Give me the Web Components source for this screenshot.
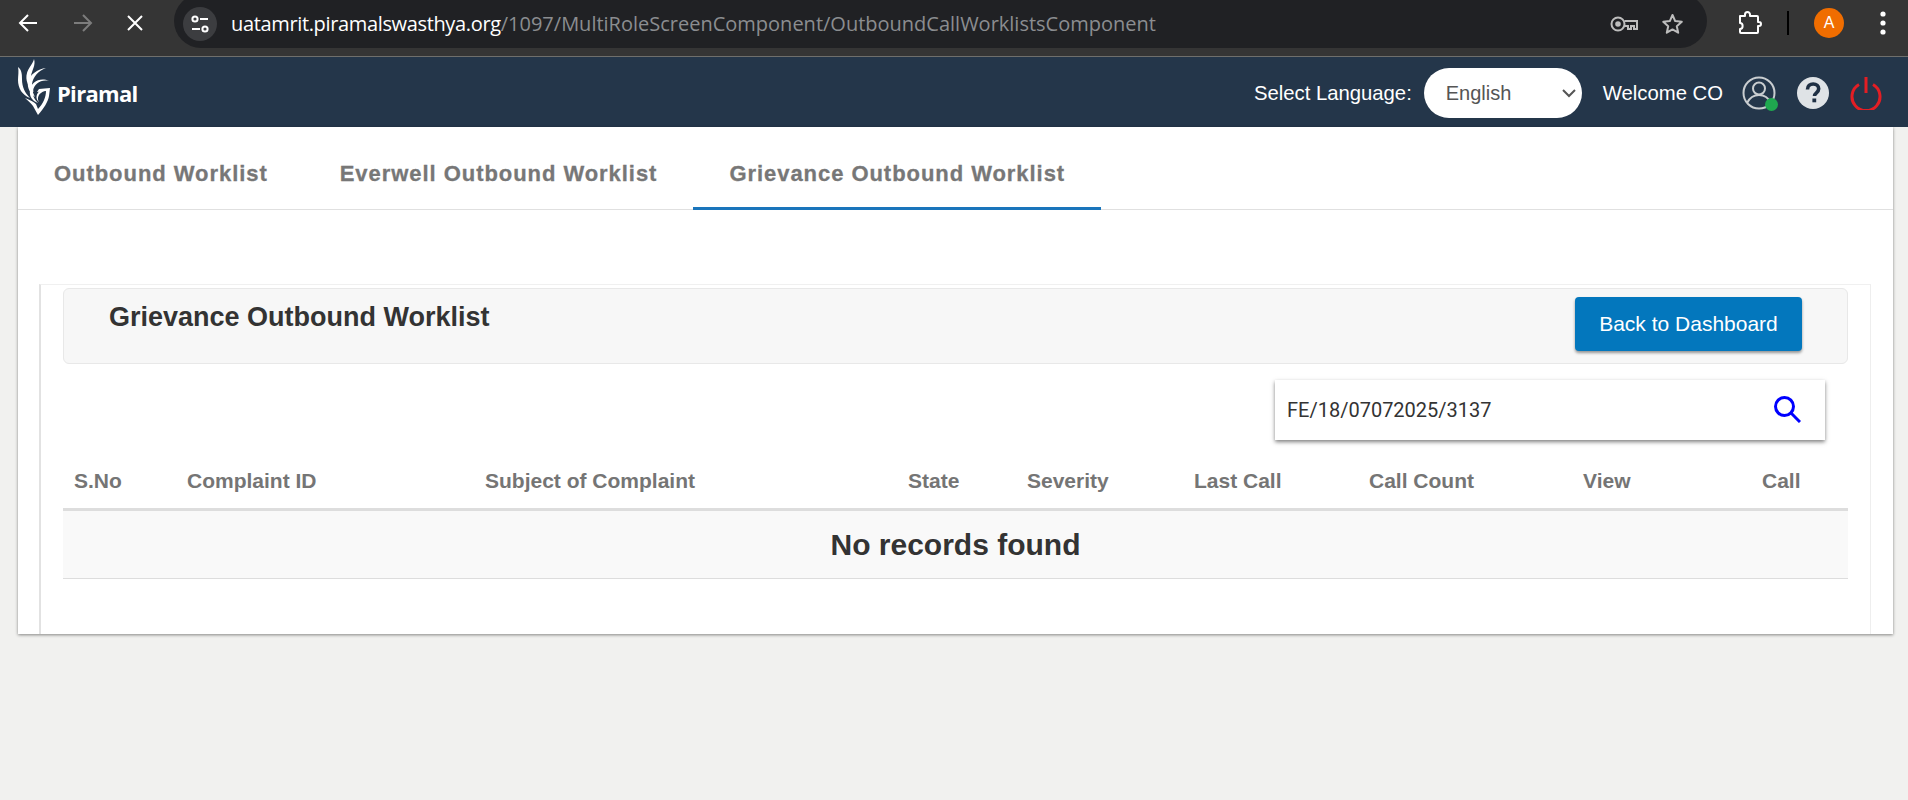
<!DOCTYPE html>
<html lang="en">
<head>
<meta charset="utf-8">
<title>Grievance Outbound Worklist</title>
<style>
    html, body { margin: 0; height: 100%; background: #f1f1ef; overflow: hidden; }
    body { font-family: "Liberation Sans", Arial, sans-serif; }
</style>
</head>
<body>
<browser-bar url-host="uatamrit.piramalswasthya.org" url-path="/1097/MultiRoleScreenComponent/OutboundCallWorklistsComponent"></browser-bar>
<app-header></app-header>
<main-card>
    <tab-bar></tab-bar>
    <worklist-panel></worklist-panel>
</main-card>

<script>
class BrowserBar extends HTMLElement {
    constructor() {
        super();
        this.attachShadow({ mode: 'open' });
        this.shadowRoot.innerHTML = `
            <style>
                :host {
                    display: flex;
                    align-items: flex-start;
                    height: 57px;
                    box-sizing: border-box;
                    background: #353535;
                    border-bottom: 1px solid #6f6f6c;
                    overflow: hidden;
                }
                .nav { display: flex; width: 174px; height: 46px; align-items: center; padding-left: 16px; gap: 29px; box-sizing: border-box; }
                .nav svg { flex: none; }
                .omni {
                    width: 1533px;
                    height: 54px;
                    margin-top: -6px;
                    padding: 6px 0 0 9px;
                    background: #202124;
                    border-radius: 27px;
                    display: flex;
                    align-items: center;
                    box-sizing: border-box;
                }
                .info { width: 34px; height: 34px; border-radius: 50%; background: #3c3d40; display: flex; align-items: center; justify-content: center; margin-right: 14px; }
                .url { font: 20px "Open Sans", sans-serif; letter-spacing: -0.35px; color: #fff; white-space: nowrap; flex: 1; margin-top: -2px; }
                .url span { color: #8b8d90; letter-spacing: 0; }
                .omni-end { display: flex; align-items: center; gap: 22px; margin-right: 22px; }
                .tools { display: flex; align-items: center; height: 46px; }
                .sep { width: 2px; height: 24px; background: #000; margin: 0 25px 0 24px; }
                .avatar { width: 30px; height: 30px; border-radius: 50%; background: #f06d00; color: #fff; font: 16px "Liberation Sans", sans-serif; display: flex; align-items: center; justify-content: center; }
                .dots { margin-left: 36px; }
            </style>
            <div class="nav">
                <svg width="24" height="24" viewBox="0 0 24 24" fill="none" stroke="#fff" stroke-width="2"><path d="M21 12H4M12 4l-8 8 8 8"/></svg>
                <svg width="24" height="24" viewBox="0 0 24 24" fill="none" stroke="#7c7c7c" stroke-width="2" style="margin-left:2px"><path d="M3 12h17M12 4l8 8-8 8"/></svg>
                <svg width="22" height="22" viewBox="0 0 22 22" fill="none" stroke="#fff" stroke-width="2" style="margin-left:0"><path d="M4 4l14 14M18 4L4 18"/></svg>
            </div>
            <div class="omni">
                <div class="info">
                    <svg width="20" height="18" viewBox="0 0 20 18" fill="none" stroke="#fff" stroke-width="2"><circle cx="5" cy="4" r="2.6"/><path d="M10 4h8M2 14h8"/><circle cx="15" cy="14" r="2.6"/></svg>
                </div>
                <div class="url"><b id="host" style="font-weight:400"></b><span id="path"></span></div>
                <div class="omni-end">
                    <svg width="28" height="18" viewBox="0 0 28 18" fill="none" stroke="#bdbdbd" stroke-width="2"><circle cx="8" cy="9" r="6.5"/><circle cx="8" cy="9" r="1.8" fill="#bdbdbd"/><path d="M14.5 6H27v8h-3v-3h-3v3h-3v-3h-3.5"/></svg>
                    <svg width="25" height="24" viewBox="0 0 24 24" fill="none" stroke="#bdbdbd" stroke-width="2" stroke-linejoin="round"><path d="M12 3l2.7 6.1 6.6.7-5 4.4 1.4 6.500L12 17.400l-5.700 3.300 1.400-6.500-5-4.400 6.600-.7z"/></svg>
                </div>
            </div>
            <div class="tools">
                <svg width="26" height="24" viewBox="0 0 26 24" fill="none" stroke="#fff" stroke-width="2" style="margin-left:30px" stroke-linejoin="round"><path d="M3 5h5V3.500a2.500 2.500 0 0 1 5 0V5h7a1 1 0 0 1 1 1v5h1a2 2 0 0 1 0 4h-1v6a1 1 0 0 1-1 1H4a1 1 0 0 1-1-1v-3c3.500 0 3.500-6 0-6z"/></svg>
                <div class="sep"></div>
                <div class="avatar">A</div>
                <svg class="dots" width="6" height="24" viewBox="0 0 6 24" fill="#fff"><circle cx="3" cy="3" r="2.6"/><circle cx="3" cy="12" r="2.6"/><circle cx="3" cy="21" r="2.6"/></svg>
            </div>
        `;
    }

    connectedCallback() {
        this.shadowRoot.getElementById('host').textContent = this.getAttribute('url-host');
        this.shadowRoot.getElementById('path').textContent = this.getAttribute('url-path');
    }
}

class AppHeader extends HTMLElement {
    constructor() {
        super();
        this.attachShadow({ mode: 'open' });
        this.shadowRoot.innerHTML = `
            <style>
                :host {
                    display: flex;
                    align-items: center;
                    height: 70px;
                    box-sizing: border-box;
                    padding-top: 2px;
                    background: #24364a;
                    color: #fff;
                    font: 20.3px "Liberation Sans", Arial, sans-serif;
                }
                .logo { display: flex; align-items: center; padding-left: 18px; flex: 1; margin-top: -5px; }
                .logo svg { transform: translateY(-4px); }
                .logo b { font: 700 22px "Open Sans", sans-serif; margin: 4px 0 0 6px; letter-spacing: -0.7px; }
                .lang {
                    width: 158px;
                    height: 50px;
                    box-sizing: border-box;
                    border-radius: 25px;
                    background: #fff;
                    color: #555;
                    font-size: 20px;
                    padding: 0 5px 0 22px;
                    margin: 0 21px 0 12px;
                    display: flex;
                    align-items: center;
                    justify-content: space-between;
                }
                .user { position: relative; width: 34px; height: 34px; margin-left: 19px; }
                .dot { position: absolute; right: -2px; bottom: -1px; width: 13px; height: 13px; border-radius: 50%; background: #1fa84f; }
                .help { width: 32px; height: 32px; margin-left: 21px; }
                .power { width: 32px; height: 34px; margin: 0 26px 0 21px; }
                svg { display: block; }
            </style>
            <div class="logo">
                <svg width="33" height="56" viewBox="0 0 33 56" fill="#fff">
                    <path d="M16 0c2 6-2 11-3 17-1 6 0 11 3 16-6-5-9-12-7-19 1-5 6-9 7-14z"/>
                    <path d="M0 8c4 3 4 8 4 12 0 8 3 14 8 19-8-3-12-10-12-18 0-4 1-9 0-13z"/>
                    <path d="M28 9c-8 3-13 9-14 16-.6 5 1 9 3 13-5-4-8-9-7-15 2-8 10-13 18-14z"/>
                    <path d="M31 22c-8-2-15 3-16 10-.7 5 2 9 5 12-6-2-9-7-8-13 1-8 10-13 19-9z"/>
                    <path d="M32 29l-1 8c-1 6-5 12-11 19l-5-9c-2-3-5-5-8-8 5 2 9 4 11 6l2 5c5-5 8-12 8-18l-9 1 2-3z"/>
                    <path d="M23 31c3-1 6-1 8-1-3 1-6 2-8 4-3 2-4 6-2 9-4-3-3-9 2-12z"/>
                </svg>
                <b>Piramal</b>
            </div>
            <span>Select Language:</span>
            <div class="lang">
                <span>English</span>
                <svg width="16" height="10" viewBox="0 0 16 10" fill="none" stroke="#555" stroke-width="2"><path d="M2 2l6 6 6-6"/></svg>
            </div>
            <span>Welcome CO</span>
            <div class="user">
                <svg width="34" height="34" viewBox="0 0 34 34" fill="none" stroke="#c9cdd0" stroke-width="2"><circle cx="17" cy="17" r="15.500"/><circle cx="17" cy="12.500" r="6"/><path d="M5 27c3-6 8-8 12-8s9 2 12 8"/></svg>
                <div class="dot"></div>
            </div>
            <div class="help">
                <svg width="32" height="32" viewBox="0 0 32 32"><circle cx="16" cy="16" r="16" fill="#dfe3e6"/><path d="M10.500 12.500c0-3.500 2.500-5.500 5.700-5.500 3.300 0 5.500 2 5.500 4.800 0 4-4.200 4-4.200 7.200" fill="none" stroke="#1f3044" stroke-width="3.600"/><rect x="15.400" y="21.500" width="3.800" height="3.800" fill="#1f3044"/></svg>
            </div>
            <div class="power">
                <svg width="32" height="34" viewBox="0 0 32 34" fill="none" stroke="#e31e24" stroke-width="3"><path d="M9 8.500a14 14 0 1 0 14 0"/><path d="M16 1v16"/></svg>
            </div>
        `;
    }
}

class MainCard extends HTMLElement {
    constructor() {
        super();
        this.attachShadow({ mode: 'open' });
        this.shadowRoot.innerHTML = `
            <style>
                :host {
                    display: block;
                    margin: 0 15px 0 18px;
                    height: 507px;
                    background: #fff;
                    box-shadow: 0 1px 3px rgba(0, 0, 0, .45);
                }
            </style>
            <slot></slot>
        `;
    }
}

class TabBar extends HTMLElement {
    constructor() {
        super();
        this.attachShadow({ mode: 'open' });
        this.shadowRoot.innerHTML = `
            <style>
                :host {
                    display: flex;
                    height: 83px;
                    box-sizing: border-box;
                    border-bottom: 1px solid #e0e0e0;
                    font: bold 22px "Liberation Sans", Arial, sans-serif;
                    -webkit-text-stroke: .3px #777;
                    color: #777;
                    letter-spacing: .95px;
                }
                .tab { padding: 11px 36px 0; display: flex; align-items: center; height: 83px; box-sizing: border-box; white-space: nowrap; }
                .active { border-bottom: 3px solid #1a75bb; padding-top: 14px; }
            </style>
            <div class="tab">Outbound Worklist</div>
            <div class="tab">Everwell Outbound Worklist</div>
            <div class="tab active">Grievance Outbound Worklist</div>
        `;
    }
}

class SearchBox extends HTMLElement {
    constructor() {
        super();
        this.attachShadow({ mode: 'open' });
        this.shadowRoot.innerHTML = `
            <style>
                :host {
                    display: flex;
                    align-items: center;
                    justify-content: space-between;
                    width: 550px;
                    height: 60px;
                    box-sizing: border-box;
                    padding: 0 24px 0 12px;
                    background: #fff;
                    box-shadow: 0 2px 4px rgba(0, 0, 0, .5);
                    font: 20px Roboto, sans-serif;
                    color: #333;
                }
                svg { display: block; margin-top: -2px; }
            </style>
            <span><slot></slot></span>
            <svg width="28" height="28" viewBox="0 0 28 28" fill="none" stroke="#0000ff" stroke-width="3"><circle cx="11.500" cy="11.500" r="9"/><path d="M18 18l9 9"/></svg>
        `;
    }
}

class WorklistTable extends HTMLElement {
    constructor() {
        super();
        this.attachShadow({ mode: 'open' });
        this.shadowRoot.innerHTML = `
            <style>
                :host { display: block; }
                .head {
                    display: grid;
                    grid-template-columns: 113px 298px 423px 119px 167px 175px 214px 179px 1fr;
                    padding: 13px 0 0 11px;
                    height: 71px;
                    align-items: center;
                    box-sizing: border-box;
                    border-bottom: 3px solid #ddd;
                    font: bold 21px "Liberation Sans", Arial, sans-serif;
                    color: #757575;
                }
                .empty {
                    height: 68px;
                    box-sizing: border-box;
                    background: #f9f9f9;
                    border-bottom: 1px solid #ddd;
                    display: flex;
                    align-items: center;
                    justify-content: center;
                    font: bold 30px "Liberation Sans", Arial, sans-serif;
                    color: #333;
                }
            </style>
            <div class="head">
                <div>S.No</div><div>Complaint ID</div><div>Subject of Complaint</div><div>State</div><div>Severity</div><div>Last Call</div><div>Call Count</div><div>View</div><div>Call</div>
            </div>
            <div class="empty">No records found</div>
        `;
    }
}

class WorklistPanel extends HTMLElement {
    constructor() {
        super();
        this.attachShadow({ mode: 'open' });
        this.shadowRoot.innerHTML = `
            <style>
                :host {
                    display: block;
                    box-sizing: border-box;
                    height: 350px;
                    margin: 74px 22px 0 21px;
                    padding: 3px 22px 0 22px;
                    border-left: 2px solid #e2e2e2;
                    border-top: 1px solid #f0f0f0;
                    border-right: 1px solid #eee;
                }
                .title-bar {
                    display: flex;
                    justify-content: space-between;
                    height: 76px;
                    box-sizing: border-box;
                    background: #f7f7f7;
                    border: 1px solid #e8e8e8;
                    border-radius: 6px;
                    padding: 8px 45px 0 45px;
                }
                h2 { margin: 5px 0 0; font: bold 27px "Liberation Sans", Arial, sans-serif; color: #333; }
                button {
                    width: 227px;
                    height: 54px;
                    border: none;
                    border-radius: 4px;
                    background: #0377bd;
                    color: #fff;
                    font: 21px "Liberation Sans", Arial, sans-serif;
                    box-shadow: 0 2px 3px rgba(0, 0, 0, .4);
                }
                .search-row { display: flex; justify-content: flex-end; padding: 16px 23px 0 0; }
            </style>
            <div class="title-bar">
                <h2>Grievance Outbound Worklist</h2>
                <button>Back to Dashboard</button>
            </div>
            <div class="search-row"><search-box>FE/18/07072025/3137</search-box></div>
            <worklist-table></worklist-table>
        `;
    }
}

customElements.define('browser-bar', BrowserBar);
customElements.define('app-header', AppHeader);
customElements.define('main-card', MainCard);
customElements.define('tab-bar', TabBar);
customElements.define('search-box', SearchBox);
customElements.define('worklist-table', WorklistTable);
customElements.define('worklist-panel', WorklistPanel);
</script>
</body>
</html>
